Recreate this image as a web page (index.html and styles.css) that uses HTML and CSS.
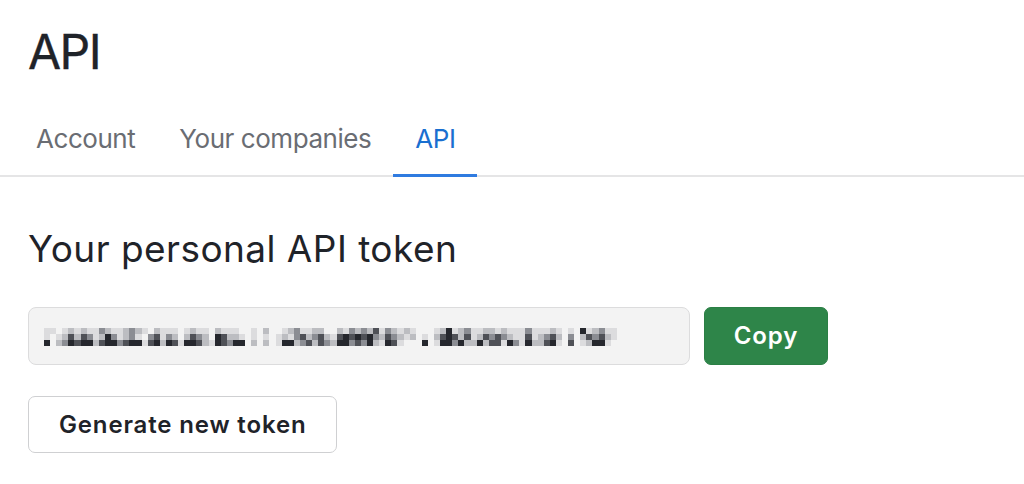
FILE: index.html
```html
<!DOCTYPE html>
<html lang="en">
<head>
<meta charset="utf-8">
<title>API</title>
<link rel="stylesheet" href="styles.css">
</head>
<body>
<header class="header">
  <h1 class="title">API</h1>
</header>
<nav class="tabs">
  <a class="tab" href="#">Account</a>
  <a class="tab" href="#">Your companies</a>
  <a class="tab active" href="#">API</a>
</nav>
<main class="content">
  <h2 class="subtitle">Your personal API token</h2>
  <div class="token-row">
    <div class="token-field" aria-label="API token (hidden)">
      <div class="mosaic">
        <b class="c1"></b><b class="c1"></b><b class="c5"></b>
        <b class="c1"></b><b></b><b></b>
        <b></b><b class="c1"></b><b class="c2"></b>
        <b class="c1"></b><b class="c2"></b><b class="c3"></b>
        <b class="c2"></b><b class="c4"></b><b class="c5"></b>
        <b class="c1"></b><b class="c2"></b><b class="c4"></b>
        <b class="c2"></b><b class="c4"></b><b class="c5"></b>
        <b class="c1"></b><b class="c3"></b><b class="c5"></b>
        <b class="c1"></b><b class="c1"></b><b class="c2"></b>
        <b class="c3"></b><b class="c2"></b><b class="c4"></b>
        <b class="c2"></b><b class="c5"></b><b class="c5"></b>
        <b class="c1"></b><b class="c3"></b><b class="c5"></b>
        <b class="c1"></b><b class="c1"></b><b class="c3"></b>
        <b class="c2"></b><b class="c2"></b><b class="c4"></b>
        <b class="c3"></b><b class="c3"></b><b class="c5"></b>
        <b class="c2"></b><b class="c1"></b><b class="c5"></b>
        <b class="c1"></b><b></b><b class="c1"></b>
        <b></b><b class="c3"></b><b class="c4"></b>
        <b class="c2"></b><b class="c4"></b><b class="c5"></b>
        <b class="c1"></b><b class="c1"></b><b class="c2"></b>
        <b class="c1"></b><b class="c3"></b><b class="c5"></b>
        <b class="c1"></b><b class="c2"></b><b class="c4"></b>
        <b></b><b></b><b class="c1"></b>
        <b class="c1"></b><b class="c2"></b><b class="c5"></b>
        <b class="c2"></b><b class="c4"></b><b class="c5"></b>
        <b class="c1"></b><b class="c3"></b><b class="c4"></b>
        <b class="c1"></b><b class="c2"></b><b class="c2"></b>
        <b></b><b></b><b class="c1"></b>
        <b class="c2"></b><b class="c5"></b><b class="c5"></b>
        <b class="c1"></b><b class="c4"></b><b class="c4"></b>
        <b class="c1"></b><b class="c2"></b><b class="c3"></b>
        <b class="c1"></b><b class="c2"></b><b class="c5"></b>
        <b></b><b class="c1"></b><b class="c5"></b>
        <b></b><b></b><b></b>
        <b class="c1"></b><b class="c1"></b><b class="c2"></b>
        <b></b><b></b><b></b>
        <b class="c2"></b><b class="c1"></b><b class="c2"></b>
        <b></b><b></b><b></b>
        <b></b><b class="c1"></b><b class="c1"></b>
        <b class="c1"></b><b class="c2"></b><b class="c5"></b>
        <b class="c2"></b><b class="c1"></b><b class="c5"></b>
        <b class="c3"></b><b class="c3"></b><b class="c2"></b>
        <b class="c1"></b><b class="c4"></b><b class="c3"></b>
        <b class="c1"></b><b class="c2"></b><b class="c4"></b>
        <b class="c2"></b><b class="c3"></b><b class="c2"></b>
        <b class="c2"></b><b class="c4"></b><b class="c4"></b>
        <b></b><b class="c2"></b><b class="c3"></b>
        <b></b><b class="c1"></b><b class="c2"></b>
        <b class="c2"></b><b class="c4"></b><b class="c5"></b>
        <b class="c1"></b><b class="c5"></b><b class="c5"></b>
        <b class="c3"></b><b class="c4"></b><b class="c3"></b>
        <b class="c2"></b><b class="c5"></b><b class="c4"></b>
        <b class="c3"></b><b class="c4"></b><b class="c3"></b>
        <b class="c2"></b><b class="c5"></b><b class="c5"></b>
        <b class="c4"></b><b class="c3"></b><b class="c2"></b>
        <b class="c1"></b><b class="c2"></b><b class="c1"></b>
        <b class="c3"></b><b class="c4"></b><b class="c5"></b>
        <b class="c2"></b><b class="c3"></b><b class="c4"></b>
        <b class="c1"></b><b class="c2"></b><b class="c1"></b>
        <b class="c2"></b><b class="c1"></b><b></b>
        <b class="c1"></b><b class="c2"></b><b></b>
        <b></b><b></b><b></b>
        <b></b><b class="c1"></b><b class="c5"></b>
        <b></b><b></b><b></b>
        <b class="c1"></b><b class="c2"></b><b class="c1"></b>
        <b class="c2"></b><b class="c4"></b><b class="c5"></b>
        <b class="c5"></b><b class="c5"></b><b class="c5"></b>
        <b class="c1"></b><b class="c4"></b><b class="c3"></b>
        <b class="c2"></b><b class="c2"></b><b class="c5"></b>
        <b class="c3"></b><b class="c4"></b><b class="c2"></b>
        <b class="c1"></b><b class="c1"></b><b class="c2"></b>
        <b class="c1"></b><b class="c2"></b><b class="c5"></b>
        <b class="c2"></b><b class="c4"></b><b class="c2"></b>
        <b class="c2"></b><b class="c3"></b><b class="c4"></b>
        <b class="c1"></b><b class="c4"></b><b class="c4"></b>
        <b class="c2"></b><b class="c3"></b><b class="c1"></b>
        <b class="c1"></b><b class="c2"></b><b class="c5"></b>
        <b class="c1"></b><b class="c1"></b><b class="c3"></b>
        <b class="c1"></b><b class="c1"></b><b class="c1"></b>
        <b class="c3"></b><b class="c4"></b><b class="c5"></b>
        <b class="c1"></b><b class="c1"></b><b class="c2"></b>
        <b class="c1"></b><b class="c2"></b><b class="c2"></b>
        <b class="c1"></b><b class="c3"></b><b class="c4"></b>
        <b class="c2"></b><b class="c4"></b><b class="c5"></b>
        <b class="c1"></b><b class="c2"></b><b class="c1"></b>
        <b></b><b></b><b></b>
        <b class="c1"></b><b class="c3"></b><b class="c4"></b>
        <b></b><b></b><b></b>
        <b class="c5"></b><b class="c2"></b><b class="c1"></b>
        <b class="c1"></b><b class="c4"></b><b class="c2"></b>
        <b class="c2"></b><b class="c3"></b><b class="c5"></b>
        <b class="c3"></b><b class="c4"></b><b class="c5"></b>
        <b class="c1"></b><b class="c2"></b><b class="c1"></b>
        <b class="c1"></b><b class="c1"></b><b></b>
      </div>
    </div>
    <button class="btn btn-primary" type="button">Copy</button>
  </div>
  <button class="btn btn-secondary" type="button">Generate new token</button>
</main>
</body>
</html>
```

FILE: styles.css
```css
* {
  box-sizing: border-box;
}

body {
  margin: 0;
  background: #ffffff;
  font-family: Inter, "Noto Sans", "Liberation Sans", sans-serif;
  color: #1f2329;
}

.header {
  padding: 23px 28px 0;
}

.title {
  margin: 0;
  font-size: 48px;
  font-weight: 400;
  line-height: 1.2;
  letter-spacing: -1.5px;
  -webkit-text-stroke: 0.4px #1f2329;
  color: #1f2329;
}

.tabs {
  display: flex;
  margin-top: 42px;
  padding-left: 14px;
  border-bottom: 2px solid #e5e5e6;
}

.tab {
  display: block;
  padding: 0 22px 19px;
  margin-bottom: -2px;
  border-bottom: 3px solid transparent;
  font-size: 26px;
  line-height: 32px;
  letter-spacing: -0.45px;
  color: #6a6d73;
  text-decoration: none;
}

.tab.active {
  color: #1a6fd0;
  border-bottom-color: #2f7be0;
}

.content {
  padding: 0 28px;
}

.subtitle {
  margin: 50px 0 0;
  font-size: 37px;
  font-weight: 400;
  line-height: 1.2;
  letter-spacing: 0.45px;
  color: #1f2329;
}

.token-row {
  display: flex;
  gap: 14px;
  margin-top: 36px;
}

.token-field {
  display: flex;
  align-items: center;
  width: 662px;
  height: 58px;
  padding: 2px 0 0 15px;
  background: #f3f3f3;
  border: 1px solid #dcdcdd;
  border-radius: 8px;
}

.mosaic {
  display: grid;
  grid-template-rows: repeat(3, 6.3px);
  grid-auto-flow: column;
  grid-auto-columns: 6.1px;
}

.mosaic b {
  display: block;
}

.mosaic .c1 { background: #dcdcde; }
.mosaic .c2 { background: #bcbdc1; }
.mosaic .c3 { background: #8b8d93; }
.mosaic .c4 { background: #4f5157; }
.mosaic .c5 { background: #25272d; }

.btn {
  display: flex;
  align-items: center;
  justify-content: center;
  height: 58px;
  padding: 0 30px;
  border-radius: 7px;
  font-family: Inter, "Noto Sans", "Liberation Sans", sans-serif;
  font-size: 24px;
  font-weight: 600;
  letter-spacing: 0.85px;
  white-space: nowrap;
  cursor: pointer;
}

.btn-primary {
  width: 124px;
  background: #2e8549;
  border: 1px solid #2b7f45;
  color: #ffffff;
}

.btn-secondary {
  margin-top: 31px;
  height: 57px;
  background: #ffffff;
  border: 1px solid #cfd0d2;
  color: #1f2329;
}
```
